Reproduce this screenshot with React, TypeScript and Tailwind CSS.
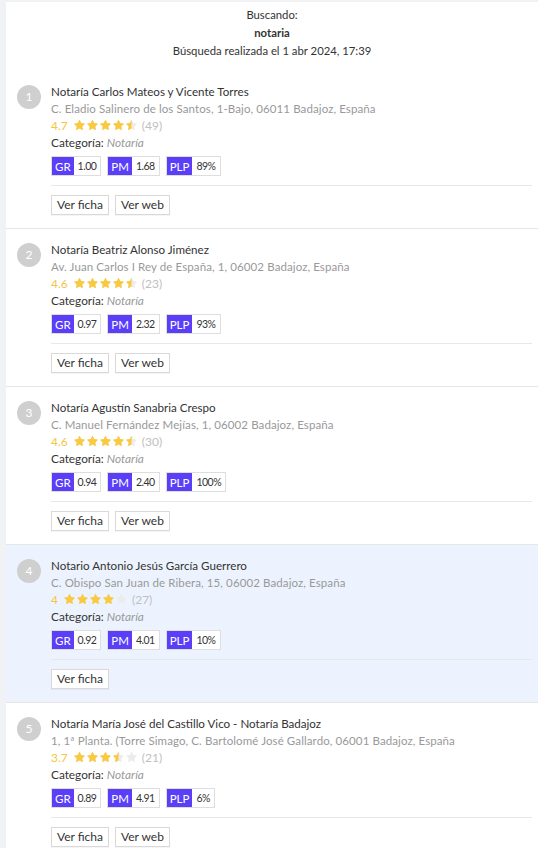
import React from 'react';

type Result = {
  name: string;
  address: string;
  rating: number;
  reviews: number;
  gr: string;
  pm: string;
  plp: string;
  web: boolean;
  highlight?: boolean;
};

const RESULTS: Result[] = [
  {
    name: 'Notaría Carlos Mateos y Vicente Torres',
    address: 'C. Eladio Salinero de los Santos, 1-Bajo, 06011 Badajoz, España',
    rating: 4.7,
    reviews: 49,
    gr: '1.00',
    pm: '1.68',
    plp: '89%',
    web: true,
  },
  {
    name: 'Notaría Beatriz Alonso Jiménez',
    address: 'Av. Juan Carlos I Rey de España, 1, 06002 Badajoz, España',
    rating: 4.6,
    reviews: 23,
    gr: '0.97',
    pm: '2.32',
    plp: '93%',
    web: true,
  },
  {
    name: 'Notaría Agustín Sanabria Crespo',
    address: 'C. Manuel Fernández Mejías, 1, 06002 Badajoz, España',
    rating: 4.6,
    reviews: 30,
    gr: '0.94',
    pm: '2.40',
    plp: '100%',
    web: true,
  },
  {
    name: 'Notario Antonio Jesús García Guerrero',
    address: 'C. Obispo San Juan de Ribera, 15, 06002 Badajoz, España',
    rating: 4,
    reviews: 27,
    gr: '0.92',
    pm: '4.01',
    plp: '10%',
    web: false,
    highlight: true,
  },
  {
    name: 'Notaría María José del Castillo Vico - Notaría Badajoz',
    address: '1, 1ª Planta. (Torre Simago, C. Bartolomé José Gallardo, 06001 Badajoz, España',
    rating: 3.7,
    reviews: 21,
    gr: '0.89',
    pm: '4.91',
    plp: '6%',
    web: true,
  },
];

const STAR =
  'M908.1 353.1l-253.9-36.9L540.7 86.1c-3.1-6.3-8.2-11.4-14.5-14.5-15.8-7.8-35-1.3-42.9 14.5L369.8 316.2l-253.9 36.9c-7 1-13.4 4.3-18.3 9.3a32.05 32.05 0 00.6 45.3l183.7 179.1-43.4 252.9a31.95 31.95 0 0046.4 33.7L512 754l227.1 119.4c6.2 3.3 13.4 4.4 20.3 3.2 17.4-3 29.1-19.5 26.1-36.9l-43.4-252.9 183.7-179.1c5-4.9 8.3-11.3 9.3-18.3 2.7-17.5-9.5-33.7-27-36.3z';

// fill: 0 empty, 0.5 half, 1 full
function Star({ fill, id }: { fill: number; id: string }) {
  return (
    <svg viewBox="64 64 896 896" className="h-[11px] w-[11px]">
      {fill === 0.5 && (
        <defs>
          <clipPath id={id}>
            <rect x="64" y="64" width="448" height="896" />
          </clipPath>
        </defs>
      )}
      <path d={STAR} fill="#ececec" />
      {fill > 0 && <path d={STAR} fill="#f9c940" clipPath={fill === 0.5 ? `url(#${id})` : undefined} />}
    </svg>
  );
}

function Stars({ rating, idx }: { rating: number; idx: number }) {
  const rounded = Math.round(rating * 2) / 2;
  return (
    <span className="flex items-center gap-[2px]">
      {[1, 2, 3, 4, 5].map((n) => {
        const fill = rounded >= n ? 1 : rounded >= n - 0.5 ? 0.5 : 0;
        return <Star key={n} fill={fill} id={`half-${idx}-${n}`} />;
      })}
    </span>
  );
}

function Metric({ label, value }: { label: string; value: string }) {
  return (
    <span className="flex h-[20px] items-stretch border border-[#dedede] bg-white">
      <span className="flex items-center bg-[#5b3ef8] px-[3px] text-[11.5px] text-white">{label}</span>
      <span className="flex items-center px-[4px] text-[10.5px] tracking-[-0.5px] text-[#333]">{value}</span>
    </span>
  );
}

function Button({ children }: { children: React.ReactNode }) {
  return (
    <button className="h-[20px] border border-[#d9d9d9] bg-white px-[5px] text-[12px] leading-[18px] text-[#333] shadow-[0_1px_1px_rgba(0,0,0,0.04)]">
      {children}
    </button>
  );
}

function ResultItem({ r, i }: { r: Result; i: number }) {
  return (
    <div
      className={`flex border-b border-[#e6e6e6] pb-[13px] pl-[11px] pr-[6px] pt-[12px] ${
        r.highlight ? 'bg-[#edf3fe]' : 'bg-white'
      }`}
    >
      <span className="mt-[2px] flex h-[24px] w-[24px] shrink-0 items-center justify-center rounded-full bg-[#cfcfcf] text-[12px] text-white">
        {i + 1}
      </span>
      <div className="ml-[10px] flex-1 leading-[17px]">
        <div className="text-[11.6px] text-[#333]">{r.name}</div>
        <div className="text-[11.5px] tracking-[0.1px] text-[#999]">{r.address}</div>
        <div className="flex items-center text-[12px]">
          <span className="text-[#f5c542]">{r.rating}</span>
          <span className="ml-[6px]">
            <Stars rating={r.rating} idx={i} />
          </span>
          <span className="ml-[5px] text-[#c0c0c0]">({r.reviews})</span>
        </div>
        <div className="text-[11.8px] text-[#333]">
          Categoría: <span className="italic text-[#999]">Notaría</span>
        </div>
        <div className="mt-[5px] flex gap-[6px]">
          <Metric label="GR" value={r.gr} />
          <Metric label="PM" value={r.pm} />
          <Metric label="PLP" value={r.plp} />
        </div>
        <div className="mt-[9px] h-px bg-[#e8e8e8]" />
        <div className="mt-[9px] flex gap-[6px]">
          <Button>Ver ficha</Button>
          {r.web && <Button>Ver web</Button>}
        </div>
      </div>
    </div>
  );
}

export default function App() {
  return (
    <div
      className="min-h-screen bg-[#f0f2f5] pl-[6px] pt-[2px]"
      style={{ fontFamily: 'Lato, "Noto Sans", sans-serif' }}
    >
      <div className="bg-white">
        <div className="pb-[11px] pt-[4px] text-center text-[11.3px] leading-[18px] text-[#333]">
          <div>Buscando:</div>
          <div className="font-bold">notaria</div>
          <div>Búsqueda realizada el 1 abr 2024, 17:39</div>
        </div>
        {RESULTS.map((r, i) => (
          <ResultItem key={r.name} r={r} i={i} />
        ))}
      </div>
    </div>
  );
}
